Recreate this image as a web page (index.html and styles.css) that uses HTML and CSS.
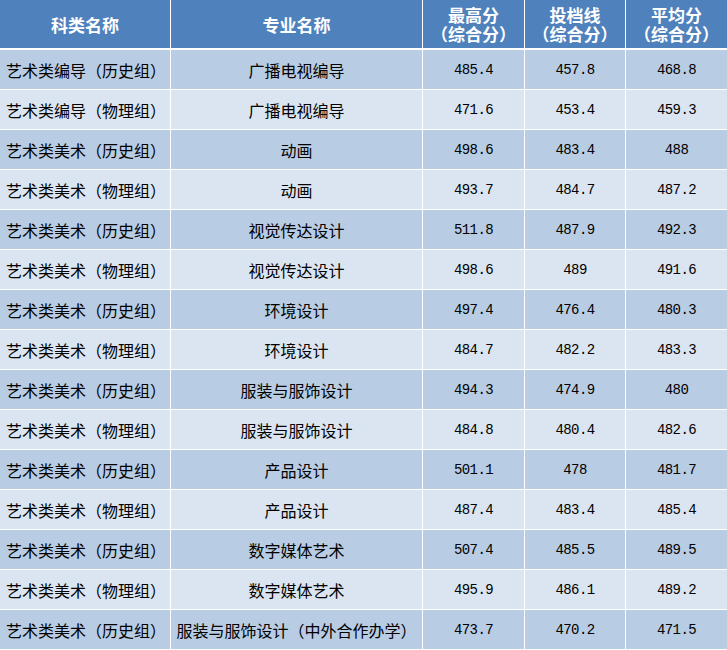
FILE: index.html
```html
<!DOCTYPE html>
<html lang="zh">
<head>
<meta charset="utf-8">
<link rel="stylesheet" href="styles.css">
</head>
<body>
<div class="grid">
  <div class="h">科类名称</div><div class="h">专业名称</div><div class="h">最高分<br>（综合分）</div><div class="h">投档线<br>（综合分）</div><div class="h">平均分<br>（综合分）</div>

  <div class="c l a">艺术类编导（历史组）</div><div class="c a">广播电视编导</div><div class="c n a">485.4</div><div class="c n a">457.8</div><div class="c n a">468.8</div>
  <div class="c l b">艺术类编导（物理组）</div><div class="c b">广播电视编导</div><div class="c n b">471.6</div><div class="c n b">453.4</div><div class="c n b">459.3</div>
  <div class="c l a">艺术类美术（历史组）</div><div class="c a">动画</div><div class="c n a">498.6</div><div class="c n a">483.4</div><div class="c n a">488</div>
  <div class="c l b">艺术类美术（物理组）</div><div class="c b">动画</div><div class="c n b">493.7</div><div class="c n b">484.7</div><div class="c n b">487.2</div>
  <div class="c l a">艺术类美术（历史组）</div><div class="c a">视觉传达设计</div><div class="c n a">511.8</div><div class="c n a">487.9</div><div class="c n a">492.3</div>
  <div class="c l b">艺术类美术（物理组）</div><div class="c b">视觉传达设计</div><div class="c n b">498.6</div><div class="c n b">489</div><div class="c n b">491.6</div>
  <div class="c l a">艺术类美术（历史组）</div><div class="c a">环境设计</div><div class="c n a">497.4</div><div class="c n a">476.4</div><div class="c n a">480.3</div>
  <div class="c l b">艺术类美术（物理组）</div><div class="c b">环境设计</div><div class="c n b">484.7</div><div class="c n b">482.2</div><div class="c n b">483.3</div>
  <div class="c l a">艺术类美术（历史组）</div><div class="c a">服装与服饰设计</div><div class="c n a">494.3</div><div class="c n a">474.9</div><div class="c n a">480</div>
  <div class="c l b">艺术类美术（物理组）</div><div class="c b">服装与服饰设计</div><div class="c n b">484.8</div><div class="c n b">480.4</div><div class="c n b">482.6</div>
  <div class="c l a">艺术类美术（历史组）</div><div class="c a">产品设计</div><div class="c n a">501.1</div><div class="c n a">478</div><div class="c n a">481.7</div>
  <div class="c l b">艺术类美术（物理组）</div><div class="c b">产品设计</div><div class="c n b">487.4</div><div class="c n b">483.4</div><div class="c n b">485.4</div>
  <div class="c l a">艺术类美术（历史组）</div><div class="c a">数字媒体艺术</div><div class="c n a">507.4</div><div class="c n a">485.5</div><div class="c n a">489.5</div>
  <div class="c l b">艺术类美术（物理组）</div><div class="c b">数字媒体艺术</div><div class="c n b">495.9</div><div class="c n b">486.1</div><div class="c n b">489.2</div>
  <div class="c l a">艺术类美术（历史组）</div><div class="c a">服装与服饰设计（中外合作办学）</div><div class="c n a">473.7</div><div class="c n a">470.2</div><div class="c n a">471.5</div>
</div>
</body>
</html>
```

FILE: styles.css
```css
html, body {
  margin: 0;
  padding: 0;
  background: #ffffff;
}
.grid {
  width: 727px;
  display: grid;
  grid-template-columns: 170px 251px 101px 100px 101px;
  grid-template-rows: 49px;
  grid-auto-rows: 39px;
  column-gap: 1px;
  row-gap: 1px;
  background: #ffffff;
  font-family: "Noto Sans CJK SC", "Noto Sans", sans-serif;
}
.h {
  background: #4f81bd;
  color: #ffffff;
  font-weight: bold;
  font-size: 17px;
  line-height: 19px;
  display: flex;
  align-items: center;
  justify-content: center;
  text-align: center;
  margin-bottom: 1px;
}
.c {
  display: flex;
  align-items: center;
  justify-content: center;
  font-size: 16px;
  color: #000000;
  white-space: nowrap;
}
.l {
  justify-content: flex-start;
  padding-left: 6px;
}
.n {
  font-family: "Liberation Mono", "DejaVu Sans Mono", monospace;
  font-size: 14px;
  letter-spacing: -0.6px;
}
.a { background: #b8cce4; }
.b { background: #dbe5f1; }
```
